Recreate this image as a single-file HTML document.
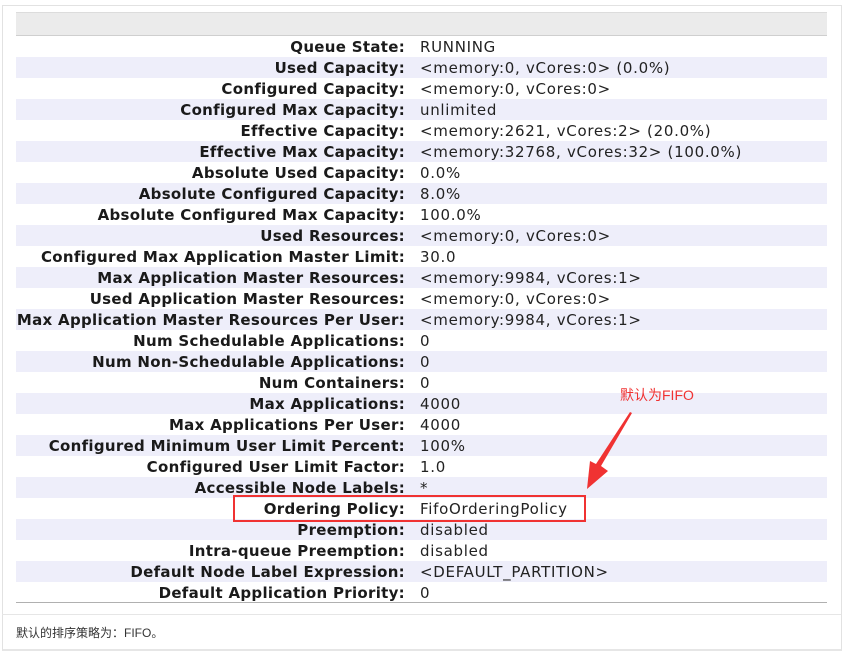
<!DOCTYPE html>
<html><head><meta charset="utf-8"><style>
body{margin:0;width:843px;height:654px;background:#fff;position:relative;overflow:hidden;font-family:"Liberation Sans","Noto Sans CJK SC",sans-serif}
.outer{position:absolute;left:2px;top:5px;width:838px;height:643px;border:1px solid #e2e2e2;border-bottom:2px solid #e6e6e6}
.hdr{position:absolute;left:16px;top:12px;width:811px;height:22px;background:#ebebeb;border-top:1px solid #dcdcdc;border-bottom:1px solid #cfcfcf}
.tbl{position:absolute;left:16px;top:36px;width:811px}
.r{height:21px;line-height:22px;font-size:15px;color:#222;position:relative;white-space:nowrap;font-family:"DejaVu Sans",sans-serif}
.r:nth-child(even){background:#eeeefa}
.l{position:absolute;right:422px;font-weight:bold;color:#1a1a1a;letter-spacing:0.3px;font-size:15px}
.v{position:absolute;left:404px;letter-spacing:0.7px}
.line{position:absolute;left:16px;top:602px;width:811px;border-top:1px solid #b0b0b0}
.sep{position:absolute;left:2px;top:614px;width:839px;border-top:1px solid #e6e6e6}
.cap{position:absolute;left:16px;top:624px;font-size:12px;color:#333}
.box{position:absolute;left:233px;top:495px;width:349px;height:23px;border:2px solid #f03232}
.note{position:absolute;left:620px;top:385px;font-size:14px;color:#f03232}
</style></head><body>
<div class="outer"></div>
<div class="hdr"></div>
<div class="tbl">
<div class="r"><span class="l">Queue State:</span><span class="v">RUNNING</span></div>
<div class="r"><span class="l">Used Capacity:</span><span class="v">&lt;memory:0, vCores:0&gt; (0.0%)</span></div>
<div class="r"><span class="l">Configured Capacity:</span><span class="v">&lt;memory:0, vCores:0&gt;</span></div>
<div class="r"><span class="l">Configured Max Capacity:</span><span class="v">unlimited</span></div>
<div class="r"><span class="l">Effective Capacity:</span><span class="v">&lt;memory:2621, vCores:2&gt; (20.0%)</span></div>
<div class="r"><span class="l">Effective Max Capacity:</span><span class="v">&lt;memory:32768, vCores:32&gt; (100.0%)</span></div>
<div class="r"><span class="l">Absolute Used Capacity:</span><span class="v">0.0%</span></div>
<div class="r"><span class="l">Absolute Configured Capacity:</span><span class="v">8.0%</span></div>
<div class="r"><span class="l">Absolute Configured Max Capacity:</span><span class="v">100.0%</span></div>
<div class="r"><span class="l">Used Resources:</span><span class="v">&lt;memory:0, vCores:0&gt;</span></div>
<div class="r"><span class="l">Configured Max Application Master Limit:</span><span class="v">30.0</span></div>
<div class="r"><span class="l">Max Application Master Resources:</span><span class="v">&lt;memory:9984, vCores:1&gt;</span></div>
<div class="r"><span class="l">Used Application Master Resources:</span><span class="v">&lt;memory:0, vCores:0&gt;</span></div>
<div class="r" style="overflow:hidden"><span class="l">Max Application Master Resources Per User:</span><span class="v">&lt;memory:9984, vCores:1&gt;</span></div>
<div class="r"><span class="l">Num Schedulable Applications:</span><span class="v">0</span></div>
<div class="r"><span class="l">Num Non-Schedulable Applications:</span><span class="v">0</span></div>
<div class="r"><span class="l">Num Containers:</span><span class="v">0</span></div>
<div class="r"><span class="l">Max Applications:</span><span class="v">4000</span></div>
<div class="r"><span class="l">Max Applications Per User:</span><span class="v">4000</span></div>
<div class="r"><span class="l">Configured Minimum User Limit Percent:</span><span class="v">100%</span></div>
<div class="r"><span class="l">Configured User Limit Factor:</span><span class="v">1.0</span></div>
<div class="r"><span class="l">Accessible Node Labels:</span><span class="v">*</span></div>
<div class="r"><span class="l">Ordering Policy:</span><span class="v">FifoOrderingPolicy</span></div>
<div class="r"><span class="l">Preemption:</span><span class="v">disabled</span></div>
<div class="r"><span class="l">Intra-queue Preemption:</span><span class="v">disabled</span></div>
<div class="r"><span class="l">Default Node Label Expression:</span><span class="v">&lt;DEFAULT_PARTITION&gt;</span></div>
<div class="r"><span class="l">Default Application Priority:</span><span class="v">0</span></div>
</div>
<div class="line"></div>
<div class="sep"></div>
<div class="cap">默认的排序策略为：FIFO。</div>
<div class="box"></div>
<div class="note">默认为FIFO</div>
<svg style="position:absolute;left:0;top:0" width="843" height="654">
<path d="M632 413 L601 466 L608 471 L587 489 L590 461 L596 464 L630 412 Z" fill="#f03232"/>
</svg>
</body></html>
